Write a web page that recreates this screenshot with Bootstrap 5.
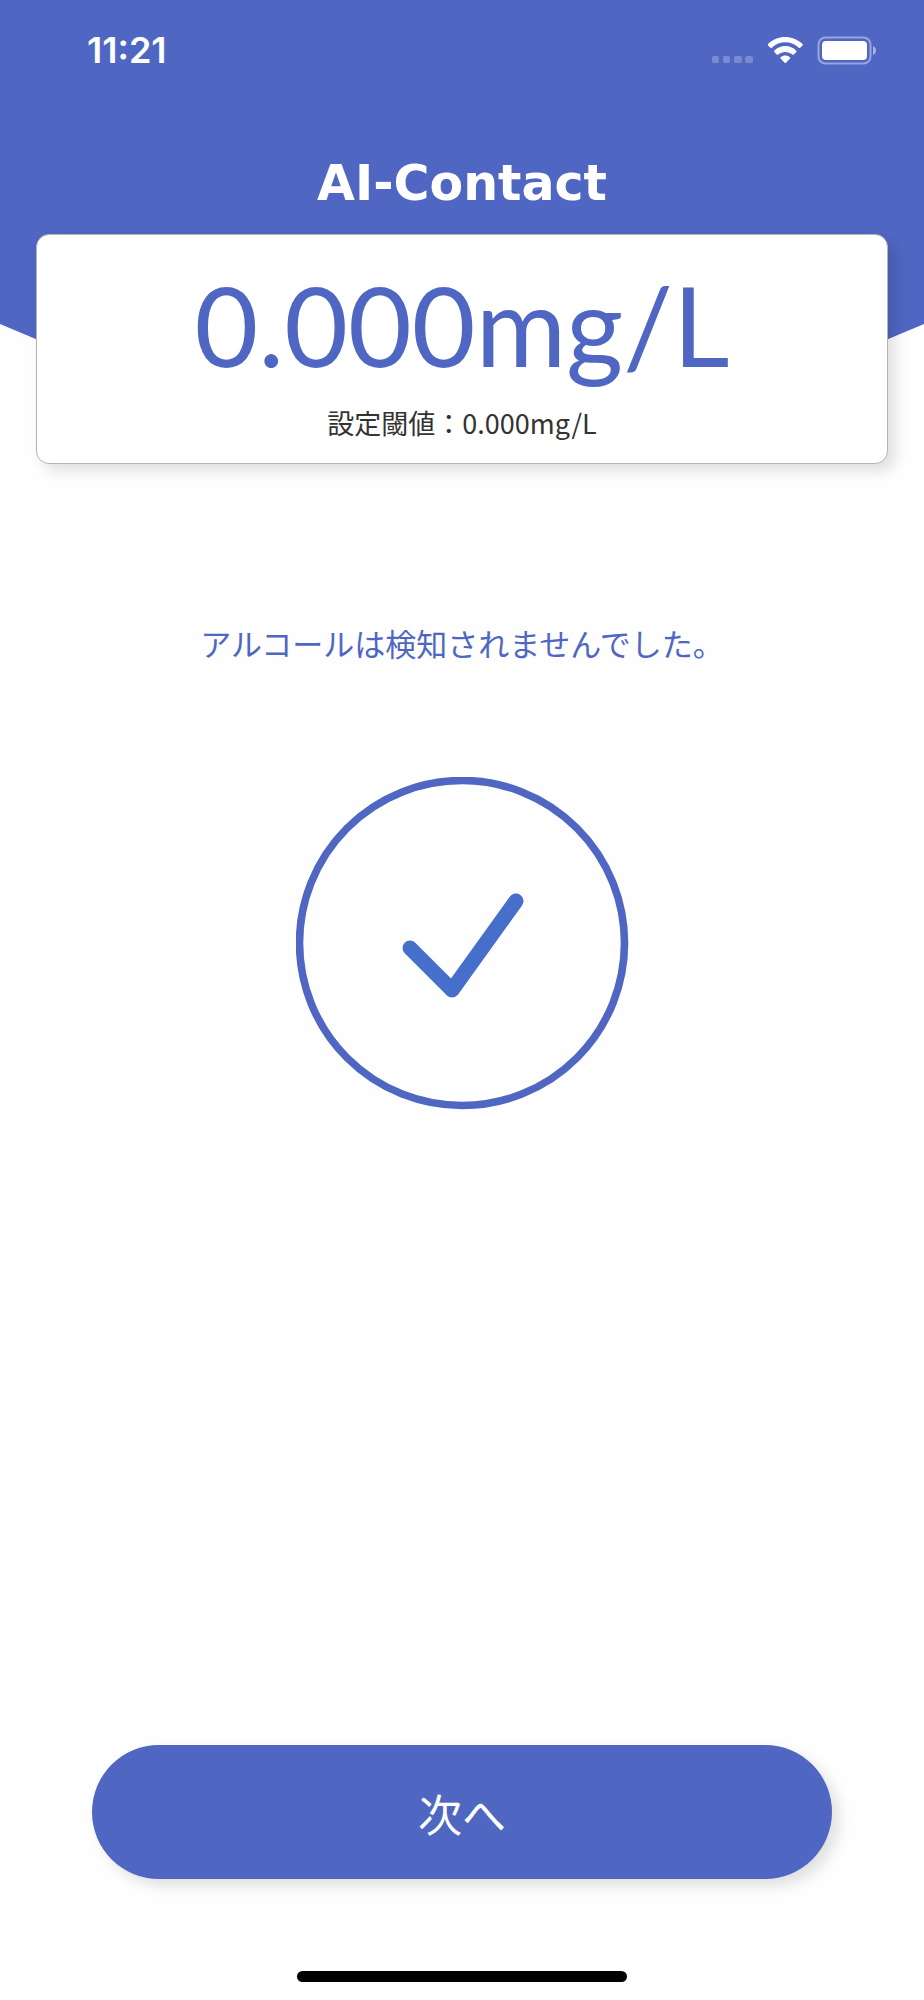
<!DOCTYPE html>
<html lang="ja">
<head>
<meta charset="utf-8">
<meta name="viewport" content="width=device-width, initial-scale=1">
<title>AI-Contact</title>
<link href="https://cdn.jsdelivr.net/npm/bootstrap@5.3.0/dist/css/bootstrap.min.css" rel="stylesheet">
<style>
  :root { --brand: #4f67c2; }
  body { font-family: "Noto Sans CJK JP", sans-serif; background: #fefefe; }
  .app-header {
    height: 366px;
    background: var(--brand);
    clip-path: polygon(0 0, 100% 0, 100% 324px, calc(100% - 100px) 100%, 100px 100%, 0 324px);
  }
  .status-bar { height: 100px; padding: 0 47px 0 87px; }
  .clock { font: 600 36px/42px Inter, sans-serif; }
  .brand-name { font: 700 49px/60px "DejaVu Sans", sans-serif; margin-top: 54px; }
  .result-card {
    margin: -132px 36px 0;
    padding: 28px 16px 14px;
    background: #fff;
    border: 1px solid #b4b4b6;
    border-radius: 13px;
    box-shadow: 7px 7px 14px rgba(0, 0, 0, .12);
  }
  .reading { font-family: Lato, sans-serif; font-size: 110px; line-height: 122px; margin-bottom: 12px; color: var(--brand); }
  .threshold { font-size: 27px; line-height: 52px; color: #333; }
  .message { font-size: 31px; line-height: 44px; color: var(--brand); margin-top: 157px; }
  .result-icon { margin-top: 112px; }
  .next-btn, .next-btn:hover {
    background: var(--brand);
    color: #fff;
    font-size: 44px;
    height: 134px;
    line-height: 136px;
    margin: 0 92px;
    box-shadow: 7px 7px 14px rgba(0, 0, 0, .12);
  }
  .home-bar { width: 330px; height: 11px; background: #000; margin: 92px auto 18px; }
</style>
</head>
<body>
<div class="d-flex flex-column min-vh-100">
  <header class="app-header text-white">
    <div class="status-bar d-flex align-items-center justify-content-between">
      <span class="clock">11:21</span>
      <svg width="167" height="40" viewBox="0 0 167 40" fill="#fff" role="img" aria-label="Wi-Fi, バッテリー">
        <g opacity=".24">
          <rect x="2" y="26" width="7" height="7" rx="2"/><rect x="13" y="26" width="7" height="7" rx="2"/>
          <rect x="24" y="26" width="8" height="7" rx="2"/><rect x="35" y="26" width="8" height="7" rx="2"/>
        </g>
        <path d="M58.1 13.9C67.5 4.7 82.5 4.7 92.5 13.9Q93.200 14.600 92.5 15.400L90.200 17.700Q89.500 18.300 88.800 17.700C80.800 10.500 69.800 10.500 61.800 17.700Q61.100 18.300 60.400 17.700L58.100 15.400Q57.400 14.600 58.100 13.900Z"/>
        <path d="M64.300 20.700C70.500 14.500 80.100 14.500 86.300 20.700Q86.900 21.400 86.300 22.100L83.800 24.500Q83.100 25.100 82.400 24.500C78.300 21.100 72.300 21.100 68.200 24.500Q67.500 25.100 66.800 24.500L64.300 22.100Q63.700 21.400 64.300 20.700Z"/>
        <path d="M70.600 27.200C73.500 25 77.100 25 80 27.200Q80.700 27.900 80 28.600L76 32.800Q75.300 33.500 74.600 32.800L70.600 28.600Q69.900 27.900 70.600 27.200Z"/>
        <rect x="108.500" y="7.500" width="52" height="26" rx="7" fill="none" stroke="#fff" stroke-width="2" opacity=".42"/>
        <rect x="112" y="11" width="45" height="19" rx="4"/>
        <path d="M163 16Q166 17.500 166 20.500T163 25Z" opacity=".5"/>
      </svg>
    </div>
    <h1 class="brand-name text-center mb-0">AI-Contact</h1>
  </header>

  <main class="d-flex flex-column flex-grow-1">
    <section class="result-card position-relative text-center">
      <p class="reading">0.000mg/L</p>
      <p class="threshold mb-0">設定閾値：0.000mg/L</p>
    </section>
    <p class="message text-center mb-0">アルコールは検知されませんでした。</p>
    <svg class="result-icon align-self-center" width="333" height="333" viewBox="0 0 333 333" fill="none" role="img" aria-label="検知なし">
      <circle cx="166" cy="166" r="162.500" stroke="#4f67c2" stroke-width="7.600"/>
      <path d="M114 171L156 213L220 124" stroke="#466ecb" stroke-width="15" stroke-linecap="round" stroke-linejoin="round"/>
    </svg>
    <button type="button" class="next-btn btn border-0 rounded-pill p-0 mt-auto">次へ</button>
    <div class="home-bar rounded-pill"></div>
  </main>
</div>
<script src="https://cdn.jsdelivr.net/npm/bootstrap@5.3.0/dist/js/bootstrap.bundle.min.js"></script>
</body>
</html>
